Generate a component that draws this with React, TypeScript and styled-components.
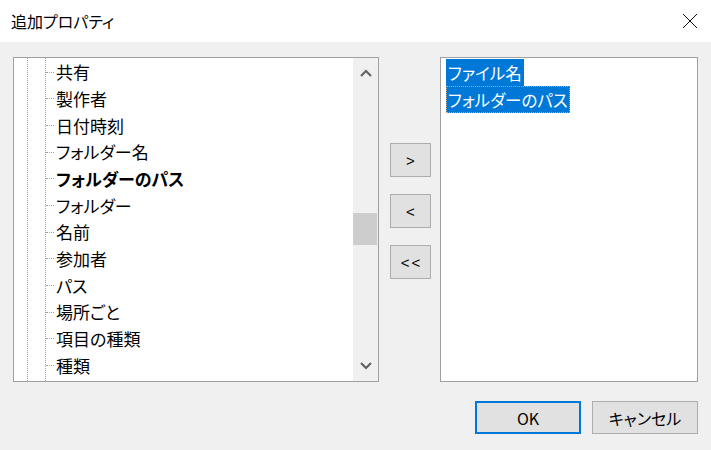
import React from 'react'
import styled, { createGlobalStyle } from 'styled-components'

const GlobalStyle = createGlobalStyle`
  html, body {
    margin: 0;
    padding: 0;
    background: #f0f0f0;
  }
  * {
    box-sizing: border-box;
  }
`

const FONT = `"Noto Sans CJK JP", "Noto Sans", sans-serif`

const treeItems = [
  '共有',
  '製作者',
  '日付時刻',
  'フォルダー名',
  'フォルダーのパス',
  'フォルダー',
  '名前',
  '参加者',
  'パス',
  '場所ごと',
  '項目の種類',
  '種類',
]

const selectedItems = ['ファイル名', 'フォルダーのパス']

const App = () => {
  return (
    <>
      <GlobalStyle />
      <Dialog>
        <TitleBar>
          <Title>追加プロパティ</Title>
          <CloseButton aria-label='close'>
            <svg width='16' height='16' viewBox='0 0 16 16'>
              <path d='M1 1 L15 15 M15 1 L1 15' stroke='#111' strokeWidth='1' fill='none' />
            </svg>
          </CloseButton>
        </TitleBar>
        <Body>
          <Lists>
            <ListBox $width={366}>
              <Tree>
                {treeItems.map((item) => (
                  <TreeRow key={item}>
                    <Dash />
                    <TreeLabel $bold={item === 'フォルダーのパス'}>{item}</TreeLabel>
                  </TreeRow>
                ))}
              </Tree>
              <ScrollBar>
                <ScrollArrow>
                  <svg width='12' height='8' viewBox='0 0 12 8'>
                    <path d='M1 7 L6 2 L11 7' stroke='#606060' strokeWidth='2' fill='none' />
                  </svg>
                </ScrollArrow>
                <Track>
                  <Thumb />
                </Track>
                <ScrollArrow>
                  <svg width='12' height='8' viewBox='0 0 12 8'>
                    <path d='M1 1 L6 6 L11 1' stroke='#606060' strokeWidth='2' fill='none' />
                  </svg>
                </ScrollArrow>
              </ScrollBar>
            </ListBox>
            <Mover>
              <MoveButton>&gt;</MoveButton>
              <MoveButton>&lt;</MoveButton>
              <MoveButton>&lt;&lt;</MoveButton>
            </Mover>
            <ListBox $width={258}>
              <PickedList>
                {selectedItems.map((item, i) => (
                  <Picked key={item} $focused={i === selectedItems.length - 1}>
                    {item}
                  </Picked>
                ))}
              </PickedList>
            </ListBox>
          </Lists>
          <Footer>
            <DialogButton $primary>OK</DialogButton>
            <DialogButton>キャンセル</DialogButton>
          </Footer>
        </Body>
      </Dialog>
    </>
  )
}

const Dialog = styled.div`
  width: 711px;
  height: 450px;
  background: #f0f0f0;
  display: flex;
  flex-direction: column;
  font-family: ${FONT};
  font-feature-settings: 'palt';
  color: #000;
`

const TitleBar = styled.div`
  height: 42px;
  background: #fff;
  display: flex;
  align-items: center;
  justify-content: space-between;
  padding: 0 13px 0 11px;
`

const Title = styled.span`
  font-size: 16px;
  line-height: 20px;
`

const CloseButton = styled.div`
  width: 16px;
  height: 16px;
  display: flex;
`

const Body = styled.div`
  flex: 1;
  padding: 15px 13px 0 13px;
  display: flex;
  flex-direction: column;
`

const Lists = styled.div`
  display: flex;
  height: 325px;
`

const ListBox = styled.div<{ $width: number }>`
  width: ${({ $width }) => $width}px;
  height: 100%;
  background: #fff;
  border: 1px solid #a0a0a0;
  display: flex;
  overflow: hidden;
`

const dots = 'repeating-linear-gradient(to bottom, #a0a0a0 0 1px, transparent 1px 2px)'

const Tree = styled.div`
  flex: 1;
  padding-top: 1px;
  background-image: ${dots}, ${dots};
  background-size: 1px 100%, 1px 100%;
  background-position: 13px 0, 31px 0;
  background-repeat: no-repeat;
`

const TreeRow = styled.div`
  height: 26.67px;
  display: flex;
  align-items: center;
`

const Dash = styled.span`
  margin-left: 32px;
  width: 8px;
  border-top: 1px dotted #a0a0a0;
`

const TreeLabel = styled.span<{ $bold?: boolean }>`
  margin-left: 2px;
  font-size: 17px;
  line-height: 22px;
  font-weight: ${({ $bold }) => ($bold ? 700 : 400)};
`

const ScrollBar = styled.div`
  width: 25px;
  background: #f0f0f0;
  display: flex;
  flex-direction: column;
`

const ScrollArrow = styled.div`
  height: 30px;
  display: flex;
  align-items: center;
  justify-content: center;
`

const Track = styled.div`
  flex: 1;
  padding-top: 125px;
`

const Thumb = styled.div`
  height: 32px;
  margin-right: 1px;
  background: #cdcdcd;
`

const Mover = styled.div`
  width: 61px;
  padding: 86px 0 0 11px;
  display: flex;
  flex-direction: column;
  gap: 17px;
`

const MoveButton = styled.div`
  width: 41px;
  height: 34px;
  background: #e1e1e1;
  border: 1px solid #adadad;
  display: flex;
  align-items: center;
  justify-content: center;
  font-size: 15px;
  letter-spacing: 2px;
  text-indent: 2px;
  font-family: 'Liberation Sans', ${FONT};
`

const PickedList = styled.div`
  padding: 1px 0 0 5px;
  display: flex;
  flex-direction: column;
  align-items: flex-start;
`

const Picked = styled.div<{ $focused?: boolean }>`
  height: 27px;
  padding: 0 1px;
  display: flex;
  align-items: center;
  background: #0078d7;
  color: #fff;
  font-size: 16.5px;
  border: 1px dotted ${({ $focused }) => ($focused ? '#e0a060' : '#0078d7')};
`

const Footer = styled.div`
  margin-top: 19px;
  display: flex;
  justify-content: flex-end;
  gap: 11px;
`

const DialogButton = styled.div<{ $primary?: boolean }>`
  width: 106px;
  height: 33px;
  background: #e1e1e1;
  border: 1px solid ${({ $primary }) => ($primary ? '#0078d7' : '#adadad')};
  box-shadow: ${({ $primary }) => ($primary ? 'inset 0 0 0 1px #0078d7' : 'none')};
  display: flex;
  align-items: center;
  justify-content: center;
  font-size: 16px;
`

export default App
